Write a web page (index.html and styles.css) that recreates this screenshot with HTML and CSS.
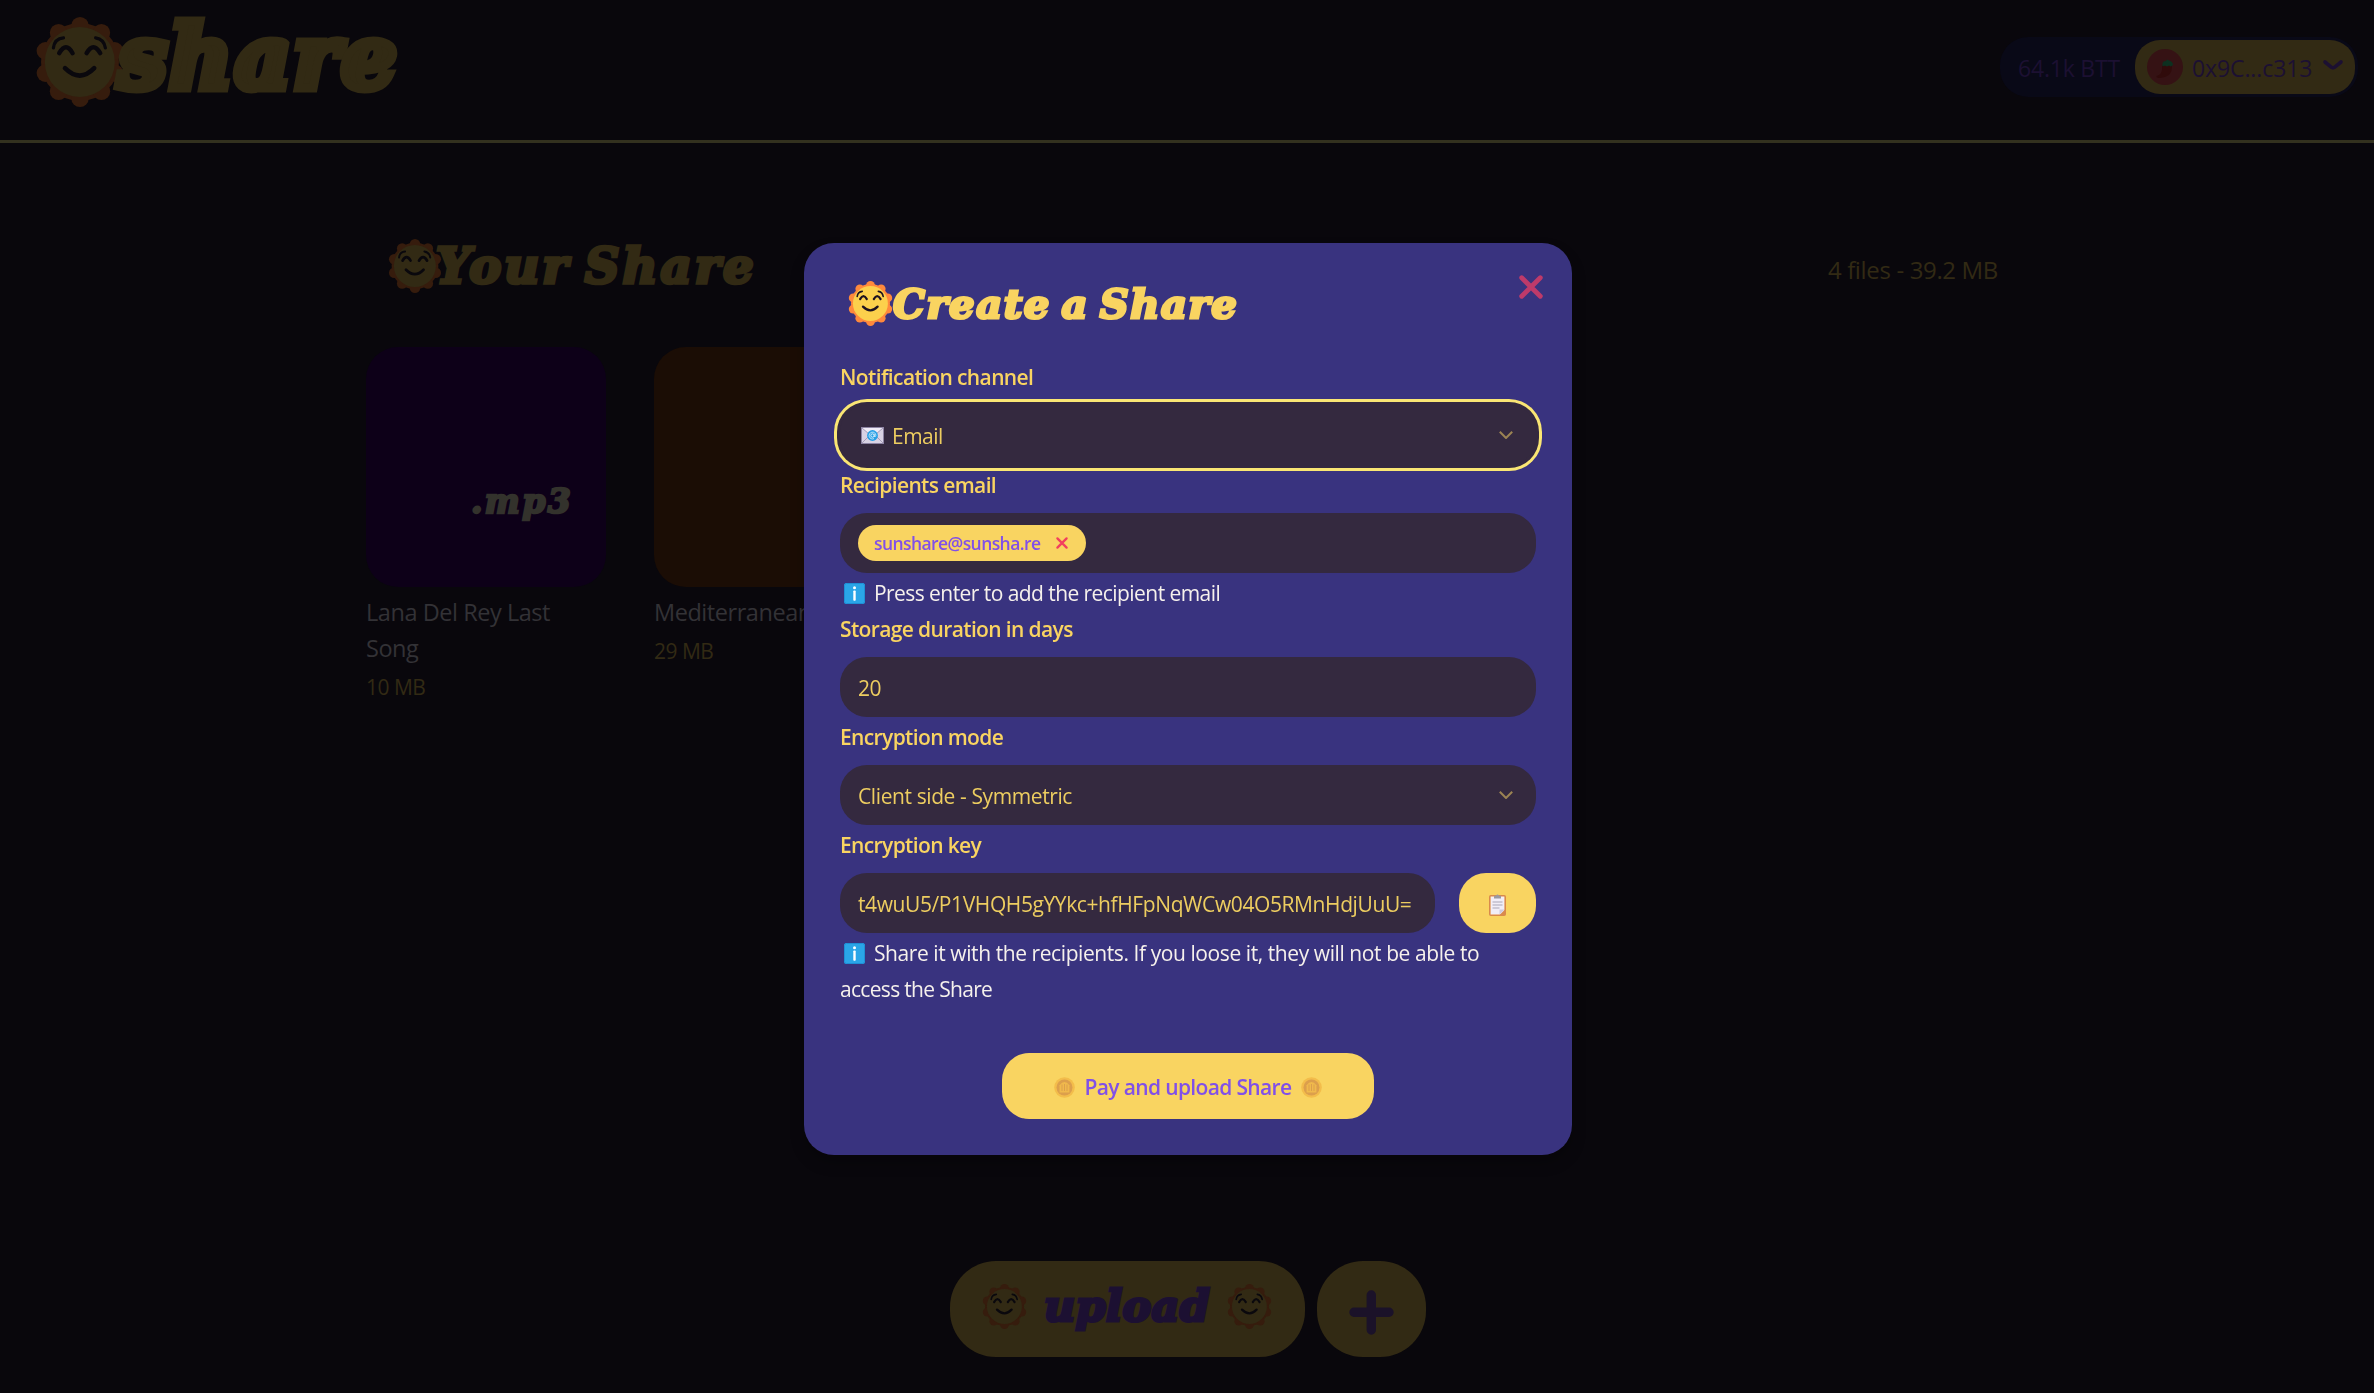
FILE: index.html
```html
<!DOCTYPE html>
<html lang="en">
<head>
<meta charset="utf-8">
<title>Sunshare</title>
<link rel="stylesheet" href="styles.css">
</head>
<body>
<svg class="defs" aria-hidden="true">
  <symbol id="sun" viewBox="0 0 90 90">
    <g fill="var(--ray)">
      <circle cx="45" cy="45" r="39"/>
      <circle cx="45" cy="8.8" r="8.8"/><circle cx="66.4" cy="15.7" r="8.8"/><circle cx="79.6" cy="33.9" r="8.8"/>
      <circle cx="79.6" cy="56.1" r="8.8"/><circle cx="66.4" cy="74.3" r="8.8"/><circle cx="45" cy="81.2" r="8.8"/>
      <circle cx="23.6" cy="74.3" r="8.8"/><circle cx="10.4" cy="56.1" r="8.8"/><circle cx="10.4" cy="33.9" r="8.8"/>
      <circle cx="23.6" cy="15.7" r="8.8"/>
    </g>
    <circle cx="44.8" cy="45" r="35" fill="var(--face)"/>
    <g fill="none" stroke="var(--ink)" stroke-linecap="round">
      <path stroke-width="3.2" d="M18.4 31Q19.5 21.5 28.5 20.8M60.6 20.8Q69 22 70.4 31"/>
      <path stroke-width="4.4" d="M24.2 36.2Q31 24.4 37.6 36.2M51.6 36.2Q58.4 24.4 65.2 36.2"/>
      <path stroke-width="4.6" d="M30 51.2Q44.8 66 59.2 51.2"/>
    </g>
  </symbol>
  <symbol id="info" viewBox="0 0 21 21">
    <rect width="21" height="21" rx="2.5" fill="#2aa5e8"/>
    <rect x=".5" y=".5" width="20" height="20" rx="2" fill="none" stroke="#1e8fd6"/>
    <circle cx="10.5" cy="4.7" r="1.5" fill="#fff"/><rect x="9.3" y="7.4" width="2.4" height="10.4" rx=".8" fill="#fff"/>
  </symbol>
  <symbol id="coin" viewBox="0 0 21 21">
    <circle cx="10.5" cy="10.5" r="10.3" fill="#f3bd4b"/><circle cx="10.5" cy="10.5" r="8" fill="#dc9f4c"/>
    <path d="M5.6 15.5V8.2Q10.5 1.6 15.4 8.2V15.5Z" fill="#f0b94c"/>
    <path d="M8 7.5V14M10.5 7V14M13 7.5V14" stroke="#dc9f4c" stroke-width="1"/>
  </symbol>
  <symbol id="arrow" viewBox="0 0 14 8">
    <path d="M.8 .8L7 7L13.2 .8" fill="none" stroke="#9b8353" stroke-width="2"/>
  </symbol>
</svg>

<header class="topbar">
  <div class="logo"><svg class="logo-sun"><use href="#sun"/></svg><span class="display logo-text">share</span></div>
  <div class="wallet">
    <span class="balance">64.1k BTT</span>
    <button class="account">
      <svg class="avatar" viewBox="0 0 36 36"><circle cx="18" cy="18" r="18" fill="#351214"/><path d="M15 16.500H25Q25.500 28 13 29Q9 29 9.500 27Q16 25.500 15 16.500Z" fill="#300b0b"/><path d="M15.500 14Q16 12 19 12L20 10.500L22 11.500Q26 12.500 26 16L24 17.500L22 16.500L20 17.500L18 16.500L15.500 17.500Z" fill="#0d3020"/></svg>
      <span class="address">0x9C...c313</span>
      <svg class="caret" viewBox="0 0 20 10"><path d="M2 2L8.500 7.300Q10 8.300 11.500 7.300L18 2" fill="none" stroke="#1c1032" stroke-width="3.600" stroke-linecap="round"/></svg>
    </button>
  </div>
</header>

<main class="page">
  <div class="heading">
    <h1 class="title"><svg class="title-sun"><use href="#sun"/></svg><span class="display title-text">Your Share</span></h1>
    <span class="total">4 files - 39.2 MB</span>
  </div>
  <div class="files">
    <article class="file">
      <div class="thumb violet"><span class="display ext">.mp3</span></div>
      <div class="name">Lana Del Rey Last Song</div>
      <div class="size">10 MB</div>
    </article>
    <article class="file">
      <div class="thumb brown"></div>
      <div class="name">Mediterranean</div>
      <div class="size">29 MB</div>
    </article>
  </div>
</main>

<footer class="actions">
  <button class="upload"><svg class="up-sun"><use href="#sun"/></svg><span class="display up-text">upload</span><svg class="up-sun"><use href="#sun"/></svg></button>
  <button class="add"><svg class="plus" viewBox="0 0 45 45"><path d="M22.300 5V40M5 22.300H40" stroke="#1b1229" stroke-width="9.400" stroke-linecap="round"/></svg></button>
</footer>

<div class="overlay">
  <form class="modal">
    <div class="modal-head">
      <h2 class="title"><svg class="modal-sun"><use href="#sun"/></svg><span class="display modal-title">Create a Share</span></h2>
      <svg class="close" viewBox="0 0 24 24"><path d="M2.700 2.700L21.300 21.300M21.300 2.700L2.700 21.300" stroke="#be3a6a" stroke-width="4.800" stroke-linecap="round"/></svg>
    </div>

    <div class="label">Notification channel</div>
    <div class="field select focused">
      <svg class="mail" viewBox="0 0 23 17"><rect x=".5" y=".5" width="22" height="16" fill="#d8d2e4" stroke="#8d84a4"/><path d="M1 1L11.500 10L22 1Z" fill="#efebf6"/><path d="M1 16L8.500 8.500M22 16L14.500 8.500M1 1L11.500 10L22 1" stroke="#a79dba" fill="none"/><circle cx="11.500" cy="8.500" r="5.400" fill="#25a0e6"/><circle cx="11.500" cy="8.500" r="1.700" fill="none" stroke="#dff2ff"/><path d="M13.200 7V9.500Q14.800 10 14.900 8.300A3.400 3.400 0 1 0 13 11.600" fill="none" stroke="#dff2ff" stroke-width=".8"/></svg>
      <span class="value">Email</span><svg class="arrow"><use href="#arrow"/></svg>
    </div>

    <div class="label">Recipients email</div>
    <div class="field"><span class="chip">sunshare@sunsha.re<svg class="remove" viewBox="0 0 12 12"><path d="M1.400 1.400L10.600 10.600M10.600 1.400L1.400 10.600" stroke="#f23f5e" stroke-width="2.300" stroke-linecap="round"/></svg></span></div>
    <div class="help"><svg class="info"><use href="#info"/></svg>Press enter to add the recipient email</div>

    <div class="label">Storage duration in days</div>
    <div class="field"><span class="value">20</span></div>

    <div class="label">Encryption mode</div>
    <div class="field select"><span class="value mode">Client side - Symmetric</span><svg class="arrow"><use href="#arrow"/></svg></div>

    <div class="label">Encryption key</div>
    <div class="key-row">
      <div class="field key"><span class="value mode">t4wuU5/P1VHQH5gYYkc+hfHFpNqWCw04O5RMnHdjUuU=</span></div>
      <button type="button" class="copy"><svg class="clipboard" viewBox="0 0 17 22"><rect x=".8" y="1.800" width="15.400" height="19.400" rx="1" fill="#fff3e8" stroke="#d98a4c" stroke-width="1.600"/><rect x="2" y="3.500" width="13" height="16.500" fill="#f1eef8"/><path d="M5 4.500V1.800H7Q8.500-.8 10 1.800H12V4.500Z" fill="#9a9aa2"/><path d="M3.500 8H13.500M3.500 11H13.500M3.500 14H10.500" stroke="#aaa6b8" stroke-width="1.200"/><path d="M16 15.500L10.500 21H16Z" fill="#d98a4c"/><path d="M10.500 20.500V15.500H15.500Z" fill="#cfcadf"/></svg></button>
    </div>
    <div class="help long"><svg class="info"><use href="#info"/></svg>Share it with the recipients. If you loose it, they will not be able to<br><span class="tight">access the Share</span></div>

    <button type="button" class="pay"><svg class="coin"><use href="#coin"/></svg><span>Pay and upload Share</span><svg class="coin"><use href="#coin"/></svg></button>
  </form>
</div>
</body>
</html>
```
FILE: styles.css
```css
* { box-sizing: border-box; margin: 0; }

body {
  --ray: #361c0d;
  --face: #322a14;
  --ink: #0a080d;
  height: 1393px;
  display: flex;
  flex-direction: column;
  overflow: hidden;
  background: #09070c;
  color: #333236;
  font: 21px/36px "Open Sans", "Noto Sans", sans-serif;
}

button { border: 0; padding: 0; font: inherit; color: inherit; }
svg { display: block; flex: none; overflow: visible; }
.defs { position: absolute; width: 0; height: 0; }

.display {
  font-family: "DejaVu Serif", serif;
  font-style: italic;
  font-weight: 700;
  line-height: 1;
  white-space: nowrap;
  color: #322a14;
  -webkit-text-stroke: 0.075em currentColor;
  word-spacing: -0.12em;
}

/* Top bar */
.topbar {
  height: 143px;
  border-bottom: 3px solid #33311f;
  display: flex;
  justify-content: space-between;
  align-items: flex-start;
  padding: 17px 16px 0 35px;
}
.logo { display: flex; align-items: flex-start; }
.logo-sun { width: 90px; height: 90px; }
.logo-text { font-size: 87px; letter-spacing: 2.200px; margin: -3px 0 0 -7px; -webkit-text-stroke-width: 9px; }

.wallet {
  margin-top: 20px;
  width: 358px;
  height: 60px;
  border-radius: 28px;
  background: #090917;
  color: #1c1032;
  display: flex;
  align-items: center;
  justify-content: space-between;
  padding: 1px 3px 0 18px;
  font-size: 23px;
  font-weight: 500;
}
.balance { letter-spacing: -.2px; }
.account {
  width: 220px;
  height: 54px;
  border-radius: 25px;
  background: #322a14;
  display: flex;
  align-items: center;
  padding-left: 12px;
  margin-top: -1px;
}
.avatar { width: 36px; height: 36px; margin-right: 9px; }
.address { letter-spacing: -.1px; width: 131px; text-align: left; padding-top: 2px; }
.caret { width: 20px; height: 10px; margin-top: -4px; }

/* File list */
.page { padding: 96px 0 0 366px; }
.heading { width: 1632px; height: 108px; display: flex; justify-content: space-between; align-items: flex-start; }
.title { display: flex; align-items: flex-start; font-size: inherit; padding-left: 22px; }
.title-sun { width: 54px; height: 54px; }
.title-text { font-size: 48px; letter-spacing: 3.100px; margin: 3px 0 0 -6px; }
.total { color: #322a14; font-size: 24px; letter-spacing: -.35px; margin-top: 13px; }
.files { display: flex; gap: 48px; }
.file { width: 240px; }
.thumb { height: 240px; border-radius: 32px; padding: 138px 33px 0 0; text-align: right; margin-bottom: 7px; }
.violet { background: #0d0018; }
.brown { background: #1b0d05; }
.ext { display: block; font-size: 33px; letter-spacing: 2.400px; color: #33322c; }
.name { font-size: 23.500px; letter-spacing: -.45px; }
.size { margin-top: 3px; color: #322a14; letter-spacing: -.5px; }

/* Bottom actions */
.actions { display: flex; gap: 12px; margin: auto 0 36px 950px; }
.upload, .add { height: 96px; border-radius: 46px; background: #322a14; display: flex; align-items: center; }
.upload { width: 355px; padding: 0 33px 5px 32px; justify-content: space-between; }
.up-sun { width: 45px; height: 45px; }
.up-text { font-size: 43px; letter-spacing: .3px; color: #1c1032; margin-top: 0; }
.add { width: 109px; justify-content: center; padding-top: 6px; }
.plus { width: 45px; height: 45px; }

/* Dialog */
.overlay { position: fixed; inset: 0; padding: 243px 0 0 804px; }
.modal {
  --ray: #ff893c;
  --face: #fcd04c;
  --ink: #1e1220;
  width: 768px;
  height: 912px;
  border-radius: 30px;
  background: #39337f;
  box-shadow: 0 8px 14px rgba(0, 0, 0, .25);
  padding: 30px 36px 36px;
}
.modal-head { display: flex; justify-content: space-between; height: 84px; }
.modal .title { padding: 8px 0 0 8px; }
.modal-sun { width: 45px; height: 45px; }
.modal-title { font-size: 40px; letter-spacing: 1.600px; margin: 3px 0 0 0; color: #f9d461; }
.close { width: 24px; height: 24px; margin: 2px -7px 0 0; }

.label {
  height: 48px;
  padding-top: 2px;
  font-weight: 600;
  letter-spacing: -.63px;
  color: #f9d461;
}
.field {
  height: 60px;
  border-radius: 27px;
  background: #34293f;
  padding: 1px 22px 0 18px;
  display: flex;
  align-items: center;
  color: #edcd60;
}
.focused { box-shadow: 0 0 0 3px #34293f, 0 0 0 6px #fae674; padding-left: 21px; }
.value { letter-spacing: -.5px; white-space: nowrap; }
.mode { letter-spacing: -.4px; }
.mail { width: 23px; height: 17px; margin-right: 8px; }
.arrow { width: 14px; height: 8px; margin: -2px 1px 0 auto; }
.chip {
  width: 228px;
  height: 36px;
  border-radius: 18px;
  background: #f9d461;
  color: #8150e8;
  font-size: 17.500px;
  font-weight: 600;
  letter-spacing: -.58px;
  display: flex;
  align-items: center;
  justify-content: space-between;
  padding: 0 18px 0 16px;
  margin-top: -1px;
}
.remove { width: 12px; height: 12px; }
.help { color: #f6f1ec; letter-spacing: -.56px; white-space: nowrap; padding-top: 2px; margin-bottom: -2px; }
.long { letter-spacing: -.42px; }
.tight { letter-spacing: -.68px; }
.info { display: inline-block; width: 21px; height: 21px; margin: 0 9px 0 4px; vertical-align: -3px; }
.key-row { display: flex; gap: 24px; }
.key { width: 595px; }
.copy { width: 77px; height: 60px; border-radius: 27px; background: #f9d461; display: flex; align-items: center; justify-content: center; }
.clipboard { width: 17px; height: 22px; margin: 3px 0 0; }
.pay {
  width: 372px;
  height: 66px;
  margin: 48px auto 0;
  border-radius: 27px;
  background: #f9d461;
  color: #8150e8;
  font-weight: 600;
  letter-spacing: -.65px;
  display: flex;
  align-items: center;
  justify-content: center;
  gap: 10px;
  padding-top: 2px;
}
.coin { width: 21px; height: 21px; }
```
